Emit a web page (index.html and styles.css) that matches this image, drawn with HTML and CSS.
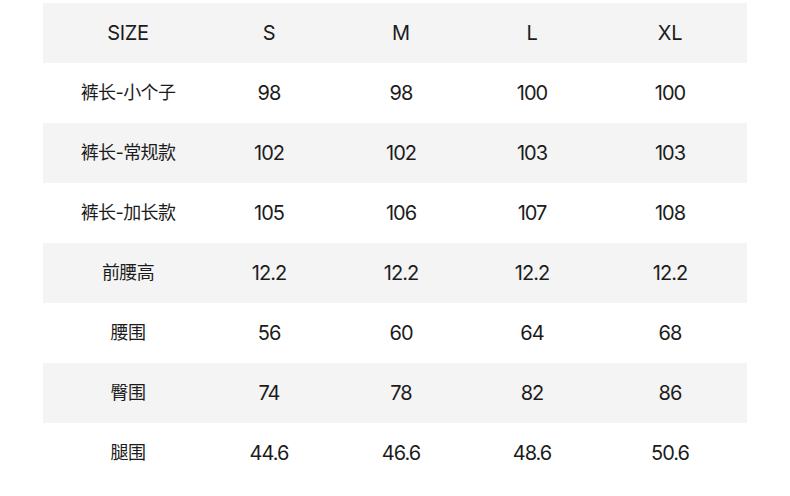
FILE: index.html
```html
<!DOCTYPE html>
<html lang="zh">
<head>
<meta charset="utf-8">
<link rel="stylesheet" href="styles.css">
</head>
<body>
<div class="table">
  <div class="row shade"><div class="hd">SIZE</div><div class="hd">S</div><div class="hd">M</div><div class="hd">L</div><div class="hd">XL</div></div>
  <div class="row"><div class="cn">裤长-小个子</div><div>98</div><div>98</div><div>100</div><div>100</div></div>
  <div class="row shade"><div class="cn">裤长-常规款</div><div>102</div><div>102</div><div>103</div><div>103</div></div>
  <div class="row"><div class="cn">裤长-加长款</div><div>105</div><div>106</div><div>107</div><div>108</div></div>
  <div class="row shade"><div class="cn">前腰高</div><div>12.2</div><div>12.2</div><div>12.2</div><div>12.2</div></div>
  <div class="row"><div class="cn">腰围</div><div>56</div><div>60</div><div>64</div><div>68</div></div>
  <div class="row shade"><div class="cn">臀围</div><div>74</div><div>78</div><div>82</div><div>86</div></div>
  <div class="row"><div class="cn">腿围</div><div>44.6</div><div>46.6</div><div>48.6</div><div>50.6</div></div>
</div>
</body>
</html>
```
FILE: styles.css
```css
html, body {
  margin: 0;
  padding: 0;
  background: #fff;
}
body {
  padding: 3px 0 0 43px;
  font-family: Inter, "Noto Sans CJK SC", sans-serif;
  color: #1c1c1c;
}
.table {
  width: 704px;
}
.row {
  display: grid;
  grid-template-columns: 170px 112px 152px 110px 166px;
  height: 60px;
  align-items: center;
}
.row.shade {
  background: #f4f4f4;
}
.row > div {
  text-align: center;
  font-size: 20px;
  letter-spacing: -1px;
  line-height: 1;
}
.row > .hd {
  letter-spacing: -0.3px;
}
.row > .cn {
  font-size: 18px;
  letter-spacing: -0.6px;
}
```
